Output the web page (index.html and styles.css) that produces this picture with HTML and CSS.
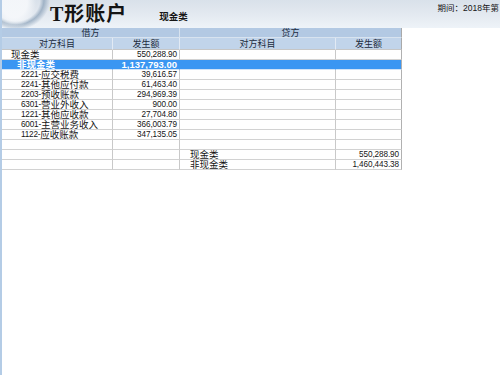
FILE: index.html
```html
<!DOCTYPE html>
<html lang="zh-CN">
<head>
<meta charset="utf-8">
<title>T形账户</title>
<link rel="stylesheet" href="styles.css">
</head>
<body>
<div class="page">
  <header class="topbar">
    <div class="title">T形账户</div>
    <div class="subtitle">现金类</div>
    <div class="period">期间：2018年第</div>
  </header>
  <div class="ledger">
    <div class="cell h1 span2">借方</div>
    <div class="cell h1 span2 last">贷方</div>
    <div class="cell h2">对方科目</div>
    <div class="cell h2">发生额</div>
    <div class="cell h2">对方科目</div>
    <div class="cell h2 last">发生额</div>

    <div class="cell lvl1">现金类</div>
    <div class="cell num">550,288.90</div>
    <div class="cell"></div>
    <div class="cell last"></div>

    <div class="cell sel lvl1b">非现金类</div>
    <div class="cell sel num bold">1,137,793.00</div>
    <div class="cell sel"></div>
    <div class="cell sel last"></div>

    <div class="cell lvl2"><span class="code">2221-</span>应交税费</div>
    <div class="cell num">39,616.57</div>
    <div class="cell"></div>
    <div class="cell last"></div>

    <div class="cell lvl2"><span class="code">2241-</span>其他应付款</div>
    <div class="cell num">61,463.40</div>
    <div class="cell"></div>
    <div class="cell last"></div>

    <div class="cell lvl2"><span class="code">2203-</span>预收账款</div>
    <div class="cell num">294,969.39</div>
    <div class="cell"></div>
    <div class="cell last"></div>

    <div class="cell lvl2"><span class="code">6301-</span>营业外收入</div>
    <div class="cell num">900.00</div>
    <div class="cell"></div>
    <div class="cell last"></div>

    <div class="cell lvl2"><span class="code">1221-</span>其他应收款</div>
    <div class="cell num">27,704.80</div>
    <div class="cell"></div>
    <div class="cell last"></div>

    <div class="cell lvl2"><span class="code">6001-</span>主营业务收入</div>
    <div class="cell num">366,003.79</div>
    <div class="cell"></div>
    <div class="cell last"></div>

    <div class="cell lvl2"><span class="code">1122-</span>应收账款</div>
    <div class="cell num">347,135.05</div>
    <div class="cell"></div>
    <div class="cell last"></div>

    <div class="cell"></div>
    <div class="cell"></div>
    <div class="cell"></div>
    <div class="cell last"></div>

    <div class="cell"></div>
    <div class="cell"></div>
    <div class="cell lvl1r">现金类</div>
    <div class="cell num last">550,288.90</div>

    <div class="cell"></div>
    <div class="cell"></div>
    <div class="cell lvl1r">非现金类</div>
    <div class="cell num last">1,460,443.38</div>
  </div>
</div>
</body>
</html>
```
FILE: styles.css
```css
* { box-sizing: border-box; }
html, body {
  margin: 0;
  padding: 0;
  width: 500px;
  height: 375px;
  overflow: hidden;
  background: #ffffff;
}
body {
  font-family: "Liberation Sans", "Noto Sans CJK SC", sans-serif;
  color: #151515;
}
.page {
  width: 500px;
  height: 375px;
  border-left: 2px solid #b4cce6;
  overflow: hidden;
}
.topbar {
  height: 28px;
  display: flex;
  align-items: flex-start;
  white-space: nowrap;
  overflow: hidden;
  background:
    radial-gradient(ellipse 22px 26px at 12px 2px, rgba(246,248,251,0.9) 0 60%, rgba(246,248,251,0) 100%),
    radial-gradient(ellipse 34px 30px at 14px 0px, rgba(150,170,190,0) 0 70%, rgba(135,158,182,0.7) 82%, rgba(150,170,190,0) 100%),
    linear-gradient(#d9e1ea 0%, #e3e9f0 50%, #eef3f8 100%);
}
.title {
  margin-left: 48px;
  margin-top: 2px;
  font-family: "Liberation Serif", "Noto Sans CJK SC", serif;
  font-size: 20px;
  font-weight: 700;
  line-height: 24px;
  color: #141414;
  letter-spacing: 1px;
}
.subtitle {
  flex-shrink: 0;
  margin-left: 32px;
  margin-top: 11px;
  font-size: 9.5px;
  font-weight: 700;
  line-height: 12px;
}
.period {
  flex-shrink: 0;
  margin-left: auto;
  padding-right: 1px;
  margin-top: 2px;
  font-size: 8.5px;
  line-height: 12px;
}
.ledger {
  display: grid;
  grid-template-columns: 111px 67px 156px 66px;
  grid-template-rows: 10px 12px;
  grid-auto-rows: 10px;
  width: 400px;
  font-size: 9.5px;
}
.cell {
  display: flex;
  align-items: center;
  padding: 0 2px;
  border-right: 1px solid #c9c9c9;
  border-bottom: 1px solid #d2d2d2;
  white-space: nowrap;
  overflow: hidden;
  line-height: 10px;
}
.cell.last { border-right-color: #b0b0b0; }
.span2 { grid-column: span 2; }
.h1 {
  justify-content: center;
  background: #b3c9e3;
  border-right-color: #d8e3ef;
  border-bottom-color: #d8e3ef;
  color: #1c2b3d;
  font-size: 9px;
}
.h2 {
  justify-content: center;
  background: #c1d4ea;
  border-right-color: #e2eaf4;
  border-bottom-color: #c6c6c6;
  color: #1c2b3d;
  font-size: 9px;
}
.h1.last, .h2.last { border-right-color: #a9a9a9; }
.num {
  justify-content: flex-end;
  font-size: 8.2px;
  letter-spacing: -0.1px;
  padding-right: 2px;
}
.num.bold {
  font-weight: 700;
  font-size: 9.5px;
  letter-spacing: 0;
}
.lvl1 { padding-left: 9px; }
.lvl1b { padding-left: 15px; font-weight: 700; }
.lvl1r { padding-left: 10px; }
.lvl2 { padding-left: 19px; }
.code { font-size: 8.2px; letter-spacing: -0.2px; }
.sel {
  background: #3a96f2;
  color: #ffffff;
  border-right-color: #3a96f2;
  border-bottom-color: #cfe3f8;
}
```
